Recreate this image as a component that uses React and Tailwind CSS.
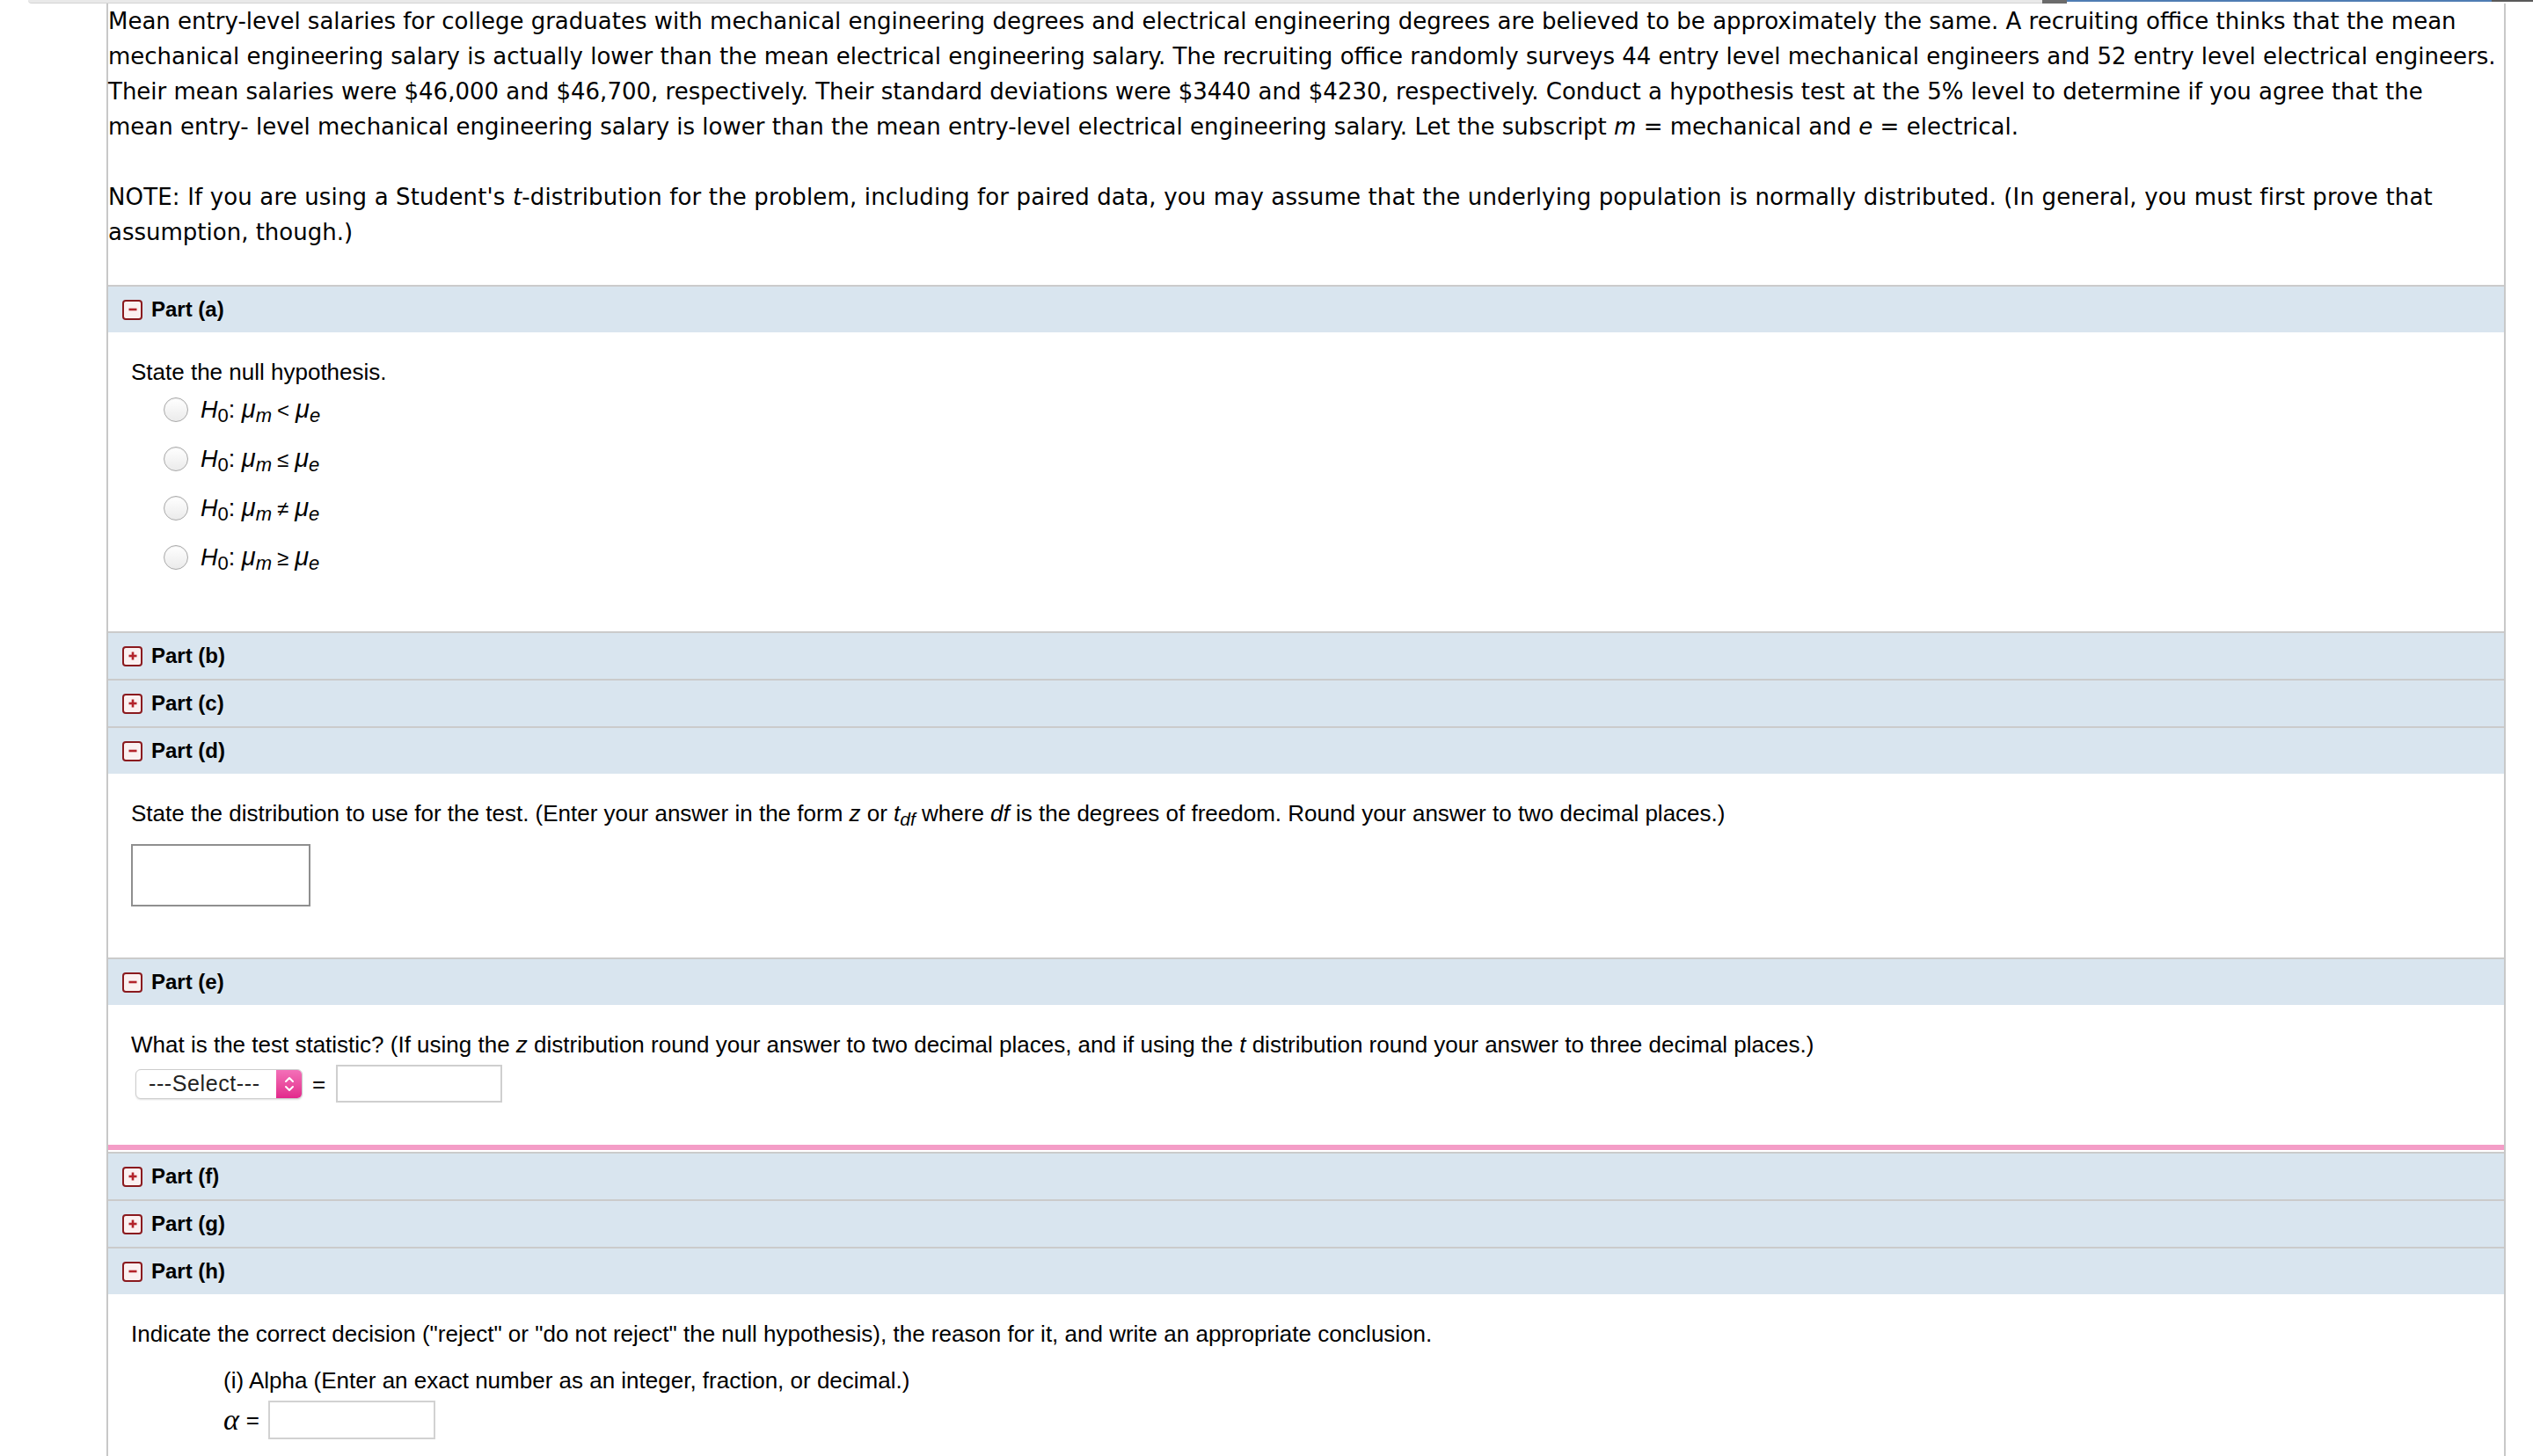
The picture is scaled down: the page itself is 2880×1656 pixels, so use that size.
import React from 'react';

const Toggle = ({ open }) => (
  <span className="flex items-center justify-center w-[23px] h-[23px] border-2 border-[#8a1a1e] rounded-[4px] bg-[#fbf1f1]">
    <svg width="12" height="12" viewBox="0 0 12 12">
      <path d="M1.5 6h9" stroke="#b3242b" strokeWidth="2.6" />
      {!open && <path d="M6 1.5v9" stroke="#b3242b" strokeWidth="2.6" />}
    </svg>
  </span>
);

const PartHeader = ({ label, open }) => (
  <div className="flex items-center gap-[10px] h-[54px] pl-[16px] border-t-2 border-[#cbcbcb] bg-[#d9e5ef]">
    <Toggle open={open} />
    <span className="font-bold text-[24px] leading-none text-black">{label}</span>
  </div>
);

const Radio = ({ rel }) => (
  <div className="flex items-center h-[56px] pl-[63px] gap-[14px]">
    <span className="w-[28px] h-[28px] rounded-full border border-[#a9a9a9] bg-gradient-to-b from-white to-[#ebebeb] shadow-[inset_0_1px_1px_rgba(0,0,0,0.08)]" />
    <span className="text-[27px] leading-[30px] text-black whitespace-nowrap">
      <i>H</i>
      <span className="relative top-[5px] text-[22px]">0</span>
      <span>: </span>
      <i className="text-[29px]">μ</i>
      <i className="relative top-[5px] text-[22px]">m</i>
      <span className="text-[24px] ml-[6px] mr-[7px]">{rel}</span>
      <i className="text-[29px]">μ</i>
      <i className="relative top-[5px] text-[22px]">e</i>
    </span>
  </div>
);

const TextBox = ({ className }) => (
  <div className={`bg-white ${className}`} />
);

export default function App() {
  return (
    <div className="min-h-[1656px] bg-white font-['Liberation_Sans',Arial,sans-serif] text-black">
      {/* top strip */}
      <div className="flex h-[4px]">
        <div className="w-[32px]" />
        <div className="w-[2290px] bg-[#e9e9e9] border-b border-[#d4d4d4] rounded-bl-[4px]" />
        <div className="w-[28px] bg-[#6b6b6b]" />
        <div className="w-[483px] h-[2px] bg-[#4f7db3]" />
        <div className="flex-1 h-[2px] bg-[#5a5a5a]" />
      </div>

      <div className="ml-[121px] w-[2728px] border-l-2 border-r-2 border-[#c8c8c8] pb-[60px]">
        <div className="font-['DejaVu_Sans',Verdana,sans-serif] text-[26px] leading-[40px] whitespace-nowrap">
          <div>Mean entry-level salaries for college graduates with mechanical engineering degrees and electrical engineering degrees are believed to be approximately the same. A recruiting office thinks that the mean</div>
          <div>mechanical engineering salary is actually lower than the mean electrical engineering salary. The recruiting office randomly surveys 44 entry level mechanical engineers and 52 entry level electrical engineers.</div>
          <div>Their mean salaries were $46,000 and $46,700, respectively. Their standard deviations were $3440 and $4230, respectively. Conduct a hypothesis test at the 5% level to determine if you agree that the</div>
          <div>mean entry- level mechanical engineering salary is lower than the mean entry-level electrical engineering salary. Let the subscript <i>m</i> = mechanical and <i>e</i> = electrical.</div>
          <div className="h-[40px]" />
          <div className="tracking-[0.15px]">NOTE: If you are using a Student's <i>t</i>-distribution for the problem, including for paired data, you may assume that the underlying population is normally distributed. (In general, you must first prove that</div>
          <div>assumption, though.)</div>
          <div className="h-[40px]" />
        </div>

        <PartHeader label="Part (a)" open />
        <div className="pt-[30px] pb-[56px]">
          <p className="pl-[26px] text-[26px] leading-[30px]">State the null hypothesis.</p>
          <Radio rel="<" />
          <Radio rel="≤" />
          <Radio rel="≠" />
          <Radio rel="≥" />
        </div>

        <PartHeader label="Part (b)" />
        <PartHeader label="Part (c)" />
        <PartHeader label="Part (d)" open />
        <div className="pt-[30px] pb-[58px] pl-[26px]">
          <p className="text-[26px] leading-[30px] whitespace-nowrap">
            State the distribution to use for the test. (Enter your answer in the form <i>z</i> or <i>t</i>
            <i className="relative top-[5px] text-[21px]">df</i> where <i>df</i> is the degrees of freedom. Round your answer to two decimal places.)
          </p>
          <TextBox className="mt-[18px] w-[204px] h-[71px] border-2 border-[#8f8f8f]" />
        </div>

        <PartHeader label="Part (e)" open />
        <div className="pt-[30px] pb-[48px] border-b-[6px] border-[#f49dc7]">
          <p className="pl-[26px] text-[26px] leading-[30px] whitespace-nowrap">
            What is the test statistic? (If using the <i>z</i> distribution round your answer to two decimal places, and if using the <i>t</i> distribution round your answer to three decimal places.)
          </p>
          <div className="flex items-center mt-[8px] pl-[31px] h-[43px]">
            <div className="flex w-[190px] h-[34px] rounded-[6px] border border-[#cdcdcd] bg-white shadow-[0_1px_2px_rgba(0,0,0,0.12)] overflow-hidden">
              <span className="flex-1 flex items-center pl-[14px] text-[25px] tracking-[0.6px] text-[#222]">---Select---</span>
              <span className="flex items-center justify-center w-[29px] bg-gradient-to-b from-[#f36fb8] to-[#e2268c]">
                <svg width="14" height="24" viewBox="0 0 14 24" fill="none" stroke="white" strokeWidth="2" strokeLinecap="round" strokeLinejoin="round">
                  <path d="M3 9l4-4 4 4" />
                  <path d="M3 15l4 4 4-4" />
                </svg>
              </span>
            </div>
            <span className="ml-[11px] text-[26px] leading-none">=</span>
            <TextBox className="ml-[12px] w-[189px] h-[43px] border-2 border-[#cfcfcf]" />
          </div>
        </div>
        <div className="h-[2px]" />

        <PartHeader label="Part (f)" />
        <PartHeader label="Part (g)" />
        <PartHeader label="Part (h)" open />
        <div className="pt-[30px] pl-[26px]">
          <p className="text-[26px] leading-[30px] whitespace-nowrap">
            Indicate the correct decision ("reject" or "do not reject" the null hypothesis), the reason for it, and write an appropriate conclusion.
          </p>
          <div className="pl-[105px]">
            <p className="mt-[23px] text-[26px] leading-[30px] whitespace-nowrap">(i) Alpha (Enter an exact number as an integer, fraction, or decimal.)</p>
            <div className="flex items-center mt-[8px] h-[44px]">
              <span className="font-['Liberation_Serif',serif] italic text-[34px] leading-none">α</span>
              <span className="ml-[8px] text-[26px] leading-none">=</span>
              <TextBox className="ml-[10px] w-[190px] h-[44px] border-2 border-[#d2d2d2]" />
            </div>
          </div>
        </div>
      </div>
    </div>
  );
}
